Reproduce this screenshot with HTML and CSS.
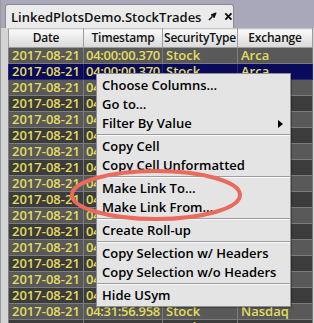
FILE: index.html
```html
<!DOCTYPE html>
<html lang="en">
  <head>
    <meta charset="UTF-8" />
    <title>LinkedPlotsDemo.StockTrades</title>
    <link rel="stylesheet" href="styles.css">
  </head>
  <body>
    <div class="window">
      <div class="tabbar">
        <div class="tab">
          <span class="tab-title">LinkedPlotsDemo.StockTrades</span>
          <svg class="tab-icon" width="9" height="9" viewBox="0 0 10 10">
            <path d="M1 9 L5 5" stroke="#111" stroke-width="1.6" fill="none" />
            <path d="M4 3 L7 6 L9 1 Z" stroke="#111" stroke-width="1.4" stroke-linejoin="round" fill="#111" />
          </svg>
          <svg class="tab-icon" width="9" height="9" viewBox="0 0 10 10">
            <path d="M1.5 1.5 L8.5 8.5 M8.5 1.5 L1.5 8.5" stroke="#111" stroke-width="2.2" fill="none" />
          </svg>
        </div>
      </div>

      <div class="panel">
        <table class="grid">
          <colgroup>
            <col class="c-date">
            <col class="c-time">
            <col class="c-type">
            <col class="c-exch">
          </colgroup>
          <thead>
            <tr>
              <th>Date</th>
              <th>Timestamp</th>
              <th>SecurityType</th>
              <th>Exchange</th>
            </tr>
          </thead>
          <tbody id="rows"></tbody>
        </table>
      </div>

      <!-- context menu -->
      <div class="menu">
        <div class="item">Choose Columns…</div>
        <div class="item">Go to…</div>
        <div class="item">Filter By Value<span class="arrow"></span></div>
        <div class="sep"></div>
        <div class="item">Copy Cell</div>
        <div class="item">Copy Cell Unformatted</div>
        <div class="sep"></div>
        <div class="item">Make Link To…</div>
        <div class="item">Make Link From…</div>
        <div class="sep"></div>
        <div class="item">Create Roll-up</div>
        <div class="sep"></div>
        <div class="item">Copy Selection w/ Headers</div>
        <div class="item">Copy Selection w/o Headers</div>
        <div class="sep"></div>
        <div class="item">Hide USym</div>
      </div>

      <svg class="ring" width="314" height="323" viewBox="0 0 314 323">
        <ellipse cx="156" cy="195" rx="84" ry="24" fill="none" stroke="#ea6a5c" stroke-width="4" />
      </svg>
    </div>

    <script>
      const rows = [
        ["2017-08-21", "04:00:00.370", "Stock", "Arca"],
        ["2017-08-21", "04:00:00.370", "Stock", "Arca"],
        ["2017-08-21", "04:00:01.112", "Stock", "Arca"],
        ["2017-08-21", "04:00:02.604", "Stock", "Arca"],
        ["2017-08-21", "04:00:05.881", "Stock", "Nasdaq"],
        ["2017-08-21", "04:00:09.230", "Stock", "Arca"],
        ["2017-08-21", "04:00:12.775", "Stock", "Nasdaq"],
        ["2017-08-21", "04:00:17.019", "Stock", "Arca"],
        ["2017-08-21", "04:00:21.463", "Stock", "Arca"],
        ["2017-08-21", "04:00:30.008", "Stock", "Nasdaq"],
        ["2017-08-21", "04:00:44.317", "Stock", "Arca"],
        ["2017-08-21", "04:01:02.950", "Stock", "Arca"],
        ["2017-08-21", "04:02:19.441", "Stock", "Nasdaq"],
        ["2017-08-21", "04:05:33.126", "Stock", "Arca"],
        ["2017-08-21", "04:12:07.580", "Stock", "Arca"],
        ["2017-08-21", "04:20:48.302", "Stock", "Nasdaq"],
        ["2017-08-21", "04:31:56.958", "Stock", "Nasdaq"],
        ["2017-08-21", "04:40:11.694", "Stock", "Arca"]
      ];
      const cellClasses = ["date", "time", "type", "exch"];
      const body = document.getElementById("rows");
      rows.forEach((r, i) => {
        const tr = document.createElement("tr");
        tr.className = i === 1 ? "selected" : (i % 2 === 0 ? "light" : "dark");
        r.forEach((v, j) => {
          const td = document.createElement("td");
          td.className = cellClasses[j];
          td.textContent = v;
          tr.appendChild(td);
        });
        body.appendChild(tr);
      });
    </script>
  </body>
</html>
```

FILE: styles.css
```css
body {
  margin: 0;
  padding: 0;
  font-family: "Open Sans", "DejaVu Sans", sans-serif;
  overflow: hidden;
  background: #a9a8bb;
}

.window {
  position: relative;
  width: 314px;
  height: 323px;
  overflow: hidden;
}

.tabbar {
  height: 28px;
  background: #a9a8bb;
  padding-left: 4px;
  display: flex;
  align-items: flex-end;
  box-sizing: border-box;
  border-left: 1px solid #9a9a9a;
}

.tab {
  width: 229px;
  height: 24px;
  box-sizing: border-box;
  background: #ebebeb;
  border: 1px solid #8c8c8c;
  border-bottom: none;
  border-radius: 3px 3px 0 0;
  display: flex;
  align-items: center;
  padding-left: 5px;
  gap: 7px;
}

.tab-title {
  font-size: 13px;
  font-weight: 600;
  color: #111;
}

.tab-icon {
  display: block;
}

.panel {
  background: #d4d4d4;
  padding-left: 8px;
  height: 295px;
  border-left: 1px solid #9a9a9a;
  box-sizing: border-box;
}

.grid {
  border-collapse: collapse;
  table-layout: fixed;
  width: 304px;
  margin-left: -1px;
}

.c-date { width: 75px; }
.c-time { width: 79px; }
.c-type { width: 75px; }
.c-exch { width: 75px; }

.grid th {
  height: 18px;
  padding: 0;
  font-size: 12px;
  font-weight: 600;
  letter-spacing: -0.2px;
  color: #111;
  background: linear-gradient(#fafafa, #d9d9d9);
  border: 1px solid #9c9c9c;
  border-top-color: #c4c4c4;
  white-space: nowrap;
  overflow: hidden;
  line-height: 18px;
}

.grid td {
  height: 15px;
  padding: 0 0 0 3px;
  font-size: 13px;
  font-weight: 600;
  color: #e3dd5e;
  border: 1px solid #7c7c7c;
  white-space: nowrap;
  overflow: hidden;
  line-height: 15px;
}

.grid td.time {
  padding-left: 2px;
  letter-spacing: -0.3px;
}

.grid tr.light td {
  background: #595959;
}

.grid tr.dark td {
  background: #3c3c3c;
}

.grid tr.selected td {
  background: #0a0a5c;
  border-color: #2a2a6a;
}

.menu {
  position: absolute;
  left: 96px;
  top: 73px;
  width: 195px;
  box-sizing: border-box;
  background: #e4e4e4;
  border: 1px solid #8e8e8e;
  padding: 2px 0 1px;
  box-shadow: 1px 1px 1px rgba(0, 0, 0, 0.25);
}

.item {
  height: 19px;
  line-height: 19px;
  padding-left: 5px;
  font-size: 13px;
  font-weight: 600;
  color: #000;
  white-space: nowrap;
  position: relative;
}

.arrow {
  position: absolute;
  right: 7px;
  top: 6px;
  border-left: 5px solid #000;
  border-top: 4px solid transparent;
  border-bottom: 4px solid transparent;
}

.sep {
  height: 0;
  margin: 1px 0;
  border-top: 1px solid #9e9e9e;
  border-bottom: 1px solid #fafafa;
}

.ring {
  position: absolute;
  left: 0;
  top: 0;
  pointer-events: none;
}
```
